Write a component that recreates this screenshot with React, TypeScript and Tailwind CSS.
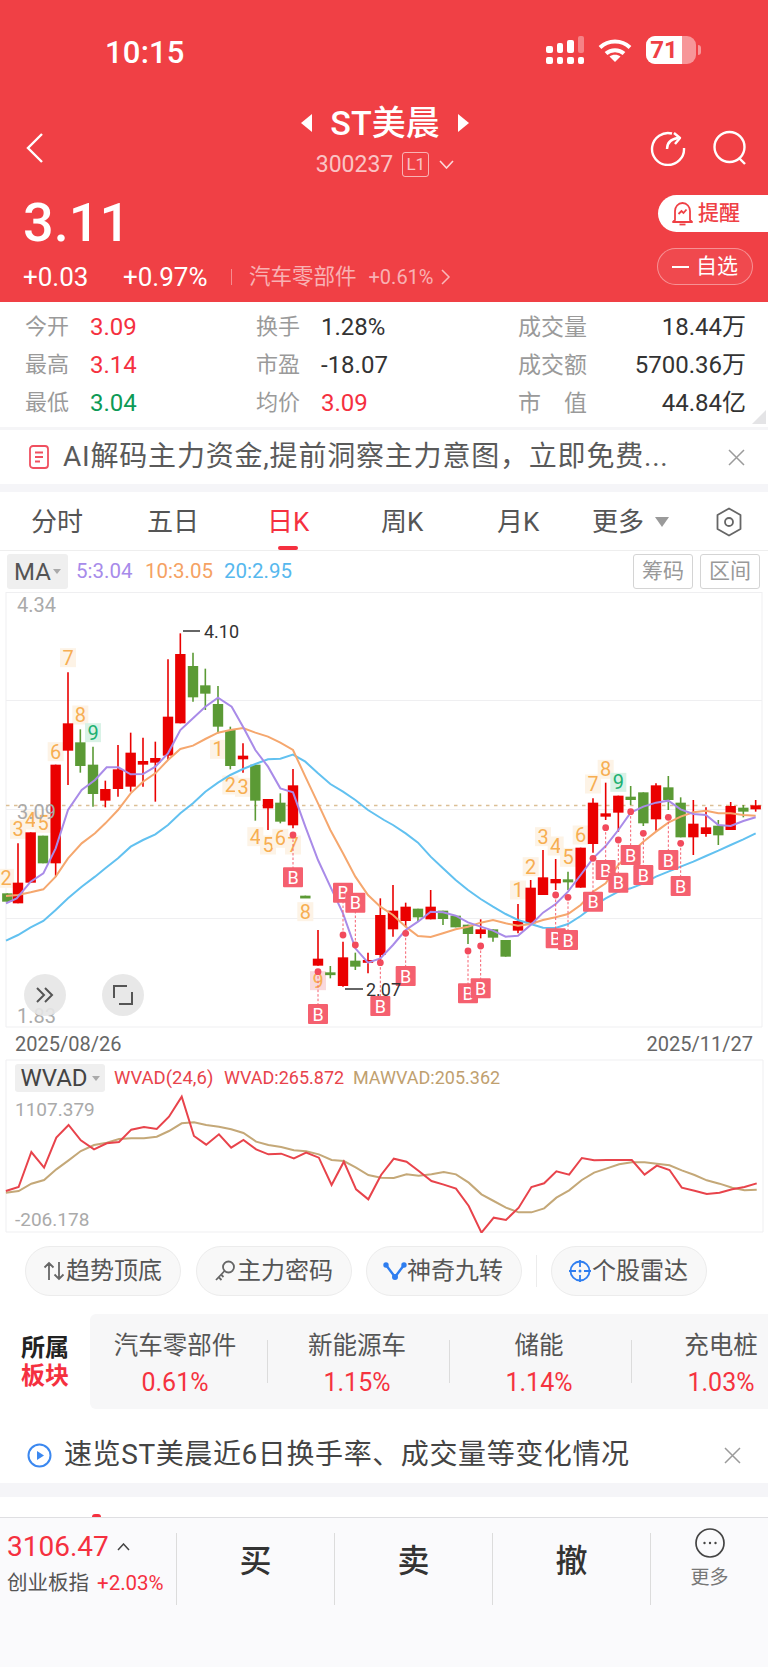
import React from "react";

const RED = "#f5303f";
type C = [number, number, number, number, number, number, number];
// i, x, high, top, bottom, low, up(1)/down(0) in zoom units
const A: C[] = [
  [0, 22, 910, 910, 935, 935, 0],[1, 54, 760, 878, 940, 940, 1],[2, 92, 727, 727, 878, 878, 1],[3, 129, 737, 737, 820, 820, 0],
  [4, 167, 524, 524, 820, 860, 1],[5, 204, 247, 400, 482, 585, 1],[6, 241, 418, 457, 528, 548, 0],[7, 279, 470, 524, 612, 650, 0],
  [8, 316, 572, 597, 632, 652, 1],[9, 354, 465, 538, 597, 620, 1],[10, 392, 428, 488, 590, 605, 1],[11, 429, 443, 513, 524, 590, 1],
  [12, 466, 455, 504, 518, 635, 1],[13, 504, 208, 380, 497, 510, 1],[14, 541, 130, 192, 400, 400, 1],[15, 579, 188, 228, 322, 335, 0],
  [16, 616, 236, 286, 311, 360, 0],[17, 654, 288, 342, 410, 430, 0],[18, 691, 410, 420, 528, 538, 0],[19, 729, 460, 497, 508, 548, 1],
  [20, 766, 524, 524, 632, 692, 0],[21, 804, 627, 627, 655, 720, 1],[22, 841, 610, 638, 695, 700, 0],[23, 879, 537, 586, 706, 715, 1],
  [24, 916, 917, 917, 922, 922, 0],[25, 954, 1020, 1106, 1127, 1127, 1],[26, 991, 1128, 1147, 1152, 1165, 0],[27, 1029, 1055, 1102, 1188, 1190, 1],
  [28, 1066, 1088, 1112, 1130, 1140, 0],[29, 1104, 1088, 1110, 1118, 1150, 1],[30, 1141, 925, 975, 1095, 1110, 1],
];
const B: C[] = [
  [31, 27, 495, 572, 628, 650, 1],[32, 65, 548, 560, 603, 620, 1],[33, 102, 566, 566, 592, 605, 0],[34, 140, 510, 560, 598, 598, 1],
  [35, 177, 572, 572, 597, 615, 0],[36, 215, 587, 587, 622, 622, 0],[37, 252, 614, 614, 642, 672, 0],[38, 290, 598, 628, 642, 655, 1],
  [39, 327, 628, 628, 653, 665, 0],[40, 365, 660, 660, 710, 710, 0],[41, 402, 552, 603, 632, 640, 1],[42, 440, 480, 503, 610, 610, 1],
  [43, 477, 390, 472, 525, 525, 1],[44, 515, 417, 477, 490, 510, 1],[45, 552, 455, 478, 487, 510, 0],[46, 590, 383, 383, 503, 503, 1],
  [47, 627, 235, 248, 372, 398, 1],[48, 665, 188, 280, 290, 300, 1],[49, 703, 227, 227, 278, 335, 1],[50, 740, 198, 230, 240, 255, 0],
  [51, 778, 217, 217, 310, 318, 0],[52, 816, 190, 196, 298, 332, 1],[53, 853, 168, 202, 240, 270, 0],[54, 890, 232, 248, 352, 352, 0],
  [55, 928, 240, 311, 352, 405, 1],[56, 966, 262, 322, 342, 350, 1],[57, 1003, 300, 317, 346, 375, 0],[58, 1040, 246, 258, 330, 330, 1],
  [59, 1078, 255, 263, 275, 292, 0],[60, 1115, 240, 256, 268, 275, 1],
];
const ax = (x: number) => x / 3, ay = (y: number) => 590 + y / 3;
const bx = (x: number) => 384 + x / 3, by = (y: number) => 720 + y / 3;
const ma5a = [[18,940],[50,925],[92,875],[130,850],[167,775],[204,660],[245,600],[285,570],[320,532],[355,532],[392,553],[429,552],[466,530],[504,490],[541,420],[579,385],[616,350],[654,323],[695,350],[729,410],[766,480],[804,530],[841,595],[879,607],[916,710],[954,810],[991,890],[1029,970],[1066,1075],[1104,1118],[1141,1105]];
const ma5b = [[27,675],[65,630],[102,605],[140,575],[177,577],[215,587],[252,607],[290,620],[327,632],[365,650],[402,647],[440,615],[477,578],[515,552],[552,515],[590,465],[627,415],[665,378],[703,330],[740,278],[778,260],[816,248],[853,242],[890,268],[928,282],[966,285],[1003,315],[1040,318],[1078,303],[1115,292]];
const ma10a = [[18,918],[54,915],[92,907],[130,898],[167,860],[204,805],[245,760],[285,730],[316,700],[354,660],[392,610],[429,575],[466,550],[504,510],[541,477],[579,467],[616,447],[654,428],[691,420],[729,414],[766,428],[804,440],[841,458],[879,480],[916,560],[954,640],[991,720],[1029,790],[1066,860],[1104,915],[1141,950]];
const ma10b = [[27,585],[65,620],[102,648],[140,651],[177,640],[215,628],[252,620],[290,608],[327,600],[365,610],[402,617],[440,612],[477,600],[515,592],[552,582],[590,555],[627,515],[665,490],[703,435],[740,400],[778,365],[816,335],[853,308],[890,290],[928,277],[966,272],[1003,280],[1040,280],[1078,285],[1115,287]];
const ma20a = [[18,1052],[54,1035],[92,1012],[130,993],[167,960],[204,925],[245,890],[285,860],[316,835],[354,805],[392,770],[429,750],[466,733],[504,705],[541,670],[579,640],[616,605],[654,578],[691,555],[729,537],[766,522],[804,508],[841,506],[879,494],[916,515],[954,550],[991,582],[1029,605],[1066,630],[1104,660],[1152,690]];
const ma20b = [[27,315],[65,340],[102,368],[140,410],[177,445],[215,480],[252,510],[290,537],[327,560],[365,582],[402,600],[440,612],[477,623],[515,624],[552,612],[590,588],[627,560],[665,535],[703,515],[740,505],[778,490],[816,470],[853,455],[890,440],[928,425],[966,408],[1003,392],[1040,375],[1078,358],[1115,340]];
const line = (a: number[][], b: number[][]) =>
  [...a.map(([x, y]) => `${ax(x)},${ay(y)}`), ...b.map(([x, y]) => `${bx(x)},${by(y)}`)].join(" ");

const tdA: [string, number, number, number][] = [["2",18,865,0],["3",54,718,0],["4",92,690,0],["5",129,700,0],["6",167,485,0],["7",204,203,0],["8",241,375,0],["9",279,428,1],["1",654,478,0],["2",691,585,0],["3",729,592,0],["4",766,740,0],["5",804,765,0],["6",841,745,0],["7",879,765,0],["8",916,965,0],["9",954,1172,2]];
const tdB: [string, number, number, number][] = [["1",402,510,0],["2",440,440,0],["3",477,350,0],["4",515,378,0],["5",552,412,0],["6",590,345,0],["7",627,192,0],["8",665,148,0],["9",703,187,1]];
const bmA = [[879,862,735],[954,1272,1145],[1029,908,1035],[1066,938,1065],[1141,1248,1118]];
const bmB = [[65,768,640],[252,820,693],[290,805,678],[515,655,525],[552,660,532],[627,545,415],[665,450,323],[703,488,360],[740,405,275],[778,465,340],[853,420,292],[890,498,370]];

const wRed = [[12,420],[38,408],[64,303],[90,350],[115,260],[140,222],[165,268],[192,295],[218,277],[243,273],[268,236],[294,228],[320,234],[345,197],[371,137],[396,255],[421,281],[447,250],[472,290],[497,267],[523,295],[548,310],[574,308],[600,322],[625,305],[651,320],[677,402],[702,332],[727,415],[752,445],[778,372],[804,323],[830,332],[855,360],[881,390],[906,401],[931,413],[957,465],[983,545],[1008,500],[1033,507],[1059,470],[1085,408],[1111,397],[1136,361],[1162,371],[1188,321],[1213,328],[1239,327],[1264,327],[1290,327],[1316,371],[1341,344],[1367,357],[1392,410],[1418,419],[1443,429],[1469,425],[1495,415],[1520,408],[1545,397]];
const wTan = [[12,425],[38,420],[64,398],[90,387],[115,355],[140,328],[165,300],[192,282],[218,275],[243,264],[268,262],[294,262],[320,257],[345,240],[371,217],[396,214],[421,222],[447,227],[472,235],[497,246],[523,272],[548,282],[574,288],[600,298],[625,301],[651,310],[677,327],[702,330],[727,350],[752,372],[778,380],[804,381],[830,370],[855,374],[881,370],[906,363],[931,370],[957,395],[983,430],[1008,450],[1033,470],[1059,484],[1085,484],[1111,472],[1136,440],[1162,418],[1188,387],[1213,365],[1239,352],[1264,340],[1290,334],[1316,334],[1341,338],[1367,343],[1392,358],[1418,372],[1443,388],[1469,398],[1495,410],[1520,418],[1545,416]];
const wl = (p: number[][]) => p.map(([x, y]) => `${x / 2.0417},${y / 3}`).join(" ");

function Candle({ c, mx, my }: { c: C; mx: (n: number) => number; my: (n: number) => number }) {
  const [, x, hi, t, b, lo, up] = c;
  const col = up ? "#ea0000" : "#5b9a35";
  return (
    <g>
      <line x1={mx(x)} x2={mx(x)} y1={my(hi)} y2={my(lo)} stroke={col} strokeWidth={1.6} />
      <rect x={mx(x) - 5.2} width={10.4} y={my(t)} height={Math.max(my(b) - my(t), 2.8)} fill={col} />
    </g>
  );
}

function TD({ t, x, y, k }: { t: string; x: number; y: number; k: number }) {
  const bg = k === 1 ? "#d9f2e6" : k === 2 ? "#f9d9dd" : "#fdf3e6";
  const fg = k === 1 ? "#20b071" : "#f7ae52";
  return (
    <g>
      <rect x={x - 8} y={y - 9.500} width={16} height={19} fill={bg} />
      <text x={x} y={y + 7} textAnchor="middle" fontSize={20} fill={fg}>{t}</text>
    </g>
  );
}

function Marker({ x, yb, yd }: { x: number; yb: number; yd: number }) {
  return (
    <g>
      <line x1={x} x2={x} y1={yd} y2={yb} stroke="#f5606f" strokeWidth={1} strokeDasharray="2.5 2" />
      <circle cx={x} cy={yd} r={3.400} fill="#f24a5c" />
      <rect x={x - 10} y={yb - 10} width={20} height={20} fill="#f5606f" rx={1} />
      <text x={x} y={yb + 6.500} textAnchor="middle" fontSize={18} fill="#fff">B</text>
    </g>
  );
}

function KChart() {
  const grid = [592.5, 700.5, 809.5, 918.5, 1027];
  return (
    <svg className="block w-[768px] h-[436px]" viewBox="0 592 768 436" fontFamily="Roboto, sans-serif">
      {grid.map((y) => <line key={y} x1={6} x2={762} y1={y} y2={y} stroke="#efeff1" strokeWidth={1} />)}
      <line x1={6} x2={6} y1={592} y2={1027} stroke="#efeff1" />
      <line x1={762} x2={762} y1={592} y2={1027} stroke="#efeff1" />
      <line x1={6} x2={762} y1={805.5} y2={805.5} stroke="#dcbf95" strokeWidth={1.4} strokeDasharray="3.5 4.5" />
      {tdA.map(([t, x, y, k], i) => <TD key={i} t={t} x={ax(x)} y={ay(y)} k={k} />)}
      {tdB.map(([t, x, y, k], i) => <TD key={i} t={t} x={bx(x)} y={by(y)} k={k} />)}
      {A.map((c) => <Candle key={c[0]} c={c} mx={ax} my={ay} />)}
      {B.map((c) => <Candle key={c[0]} c={c} mx={bx} my={by} />)}
      <polyline points={line(ma20a, ma20b)} fill="none" stroke="#62c1f0" strokeWidth={2} />
      <polyline points={line(ma10a, ma10b)} fill="none" stroke="#f5a76e" strokeWidth={2} />
      <polyline points={line(ma5a, ma5b)} fill="none" stroke="#a98be8" strokeWidth={2} />
      {bmA.map(([x, y, d], i) => <Marker key={i} x={ax(x)} yb={ay(y)} yd={ay(d)} />)}
      {bmB.map(([x, y, d], i) => <Marker key={i} x={bx(x)} yb={by(y)} yd={by(d)} />)}
      <line x1={183} x2={200} y1={631} y2={631} stroke="#333" strokeWidth={1.5} />
      <text x={204} y={638} fontSize={18} fill="#333">4.10</text>
      <line x1={345} x2={363} y1={989} y2={989} stroke="#333" strokeWidth={1.5} />
      <text x={366} y={996} fontSize={18} fill="#333">2.07</text>
    </svg>
  );
}

function Stat({ label, value, color, w }: { label: string; value: string; color: string; w: string }) {
  return (
    <div className={`flex items-center ${w}`}>
      <span className="text-[22px] leading-none w-[65px] text-[#9a9a9a]">{label}</span>
      <span className="text-[24px] leading-none" style={{ color }}>{value}</span>
    </div>
  );
}

function Pill({ icon, text }: { icon: React.ReactNode; text: string }) {
  return (
    <div className="flex items-center justify-center h-[50px] w-[156px] rounded-full bg-[#f8f8f8] border border-[#ececec] text-[24px] text-[#555] pr-[2px]">
      {icon}<span>{text}</span>
    </div>
  );
}

function Sector({ name, val, line }: { name: string; val: string; line?: boolean }) {
  return (
    <div className="relative flex flex-col items-center justify-center w-[182px] shrink-0 pt-[6px]">
      <span className="text-[24.5px] leading-none text-[#555] whitespace-nowrap">{name}</span>
      <span className="text-[25px] leading-none mt-[12px] text-[#f5333f]">{val}</span>
      {line && <span className="absolute -right-[2px] top-[26px] w-px h-[43px] bg-[#dcdcdc]" />}
    </div>
  );
}

function X() {
  return (
    <svg width="17" height="17" viewBox="0 0 17 17" fill="none" stroke="#9b9b9b" strokeWidth="1.5"><path d="M1 1l15 15M16 1L1 16" /></svg>
  );
}

export default function App() {
  return (
    <div className="w-[768px] h-[1667px] overflow-hidden bg-white flex flex-col font-['Roboto','Noto_Sans_CJK_SC',sans-serif]">
      {/* header */}
      <div className="h-[302px] shrink-0 bg-[#f04045] text-white flex flex-col">
        <div className="h-[104px] shrink-0 flex items-start pt-[36px]">
          <span className="ml-[105px] text-[31px] leading-[34px] font-medium tracking-[0.2px]">10:15</span>
          <div className="ml-auto mr-[67px] flex items-center">
            <svg width="40" height="28" viewBox="0 0 40 28" fill="#fff" className="mr-[13px]">
              <rect x="1" y="21" width="7" height="7" rx="2" /><rect x="12" y="21" width="6" height="7" rx="2" /><rect x="22" y="21" width="7" height="7" rx="2" /><rect x="33" y="21" width="6" height="7" rx="2" />
              <rect x="1" y="10" width="7" height="7" rx="2" /><rect x="12" y="7" width="6" height="10" rx="2" /><rect x="22" y="4" width="7" height="13" rx="2" /><rect x="33" y="0" width="6" height="17" rx="2" fill="#fff" fillOpacity=".35" />
            </svg>
            <svg width="34" height="25" viewBox="0 0 34 25" fill="none" stroke="#fff" strokeWidth="4" className="mr-[14px]">
              <path d="M2 9.500C10.500 1.500 23.500 1.500 32 9.500" /><path d="M8 15.500c5-4.500 13-4.500 18 0" /><path d="M17 24l-5.500-5.500c3-2.500 8-2.500 11 0z" fill="#fff" stroke="none" />
            </svg>
            <div className="relative flex h-[28px] w-[50px] rounded-[9px] overflow-hidden bg-white/45">
              <div className="w-[36px] h-full bg-white flex items-center justify-center text-[#ef4045] text-[24px] font-bold leading-none">71</div>
            </div>
            <div className="w-[3px] h-[10px] ml-[2px] rounded-r bg-white/45" />
          </div>
        </div>
        <div className="h-[77px] shrink-0 flex items-center relative -mt-[3px] mb-[3px]">
          <svg width="20" height="32" viewBox="0 0 20 32" fill="none" stroke="#fff" strokeWidth="2.400" className="ml-[25px] mt-[17px]"><path d="M17 2L3 16l14 14" /></svg>
          <div className="absolute left-[300px] top-[3px] w-[170px] flex flex-col items-center">
            <div className="flex items-center h-[38px]">
              <svg width="12" height="18" viewBox="0 0 12 18" fill="#fff" className="shrink-0"><path d="M11 0v18L0 9z" /></svg>
              <span className="text-[34px] leading-none mx-[17px] whitespace-nowrap font-medium">ST美晨</span>
              <svg width="12" height="18" viewBox="0 0 12 18" fill="#fff" className="shrink-0"><path d="M1 0v18l11-9z" /></svg>
            </div>
            <div className="flex items-center mt-[10px] text-white/70 whitespace-nowrap">
              <span className="text-[23px] leading-none">300237</span>
              <span className="ml-[9px] w-[27px] h-[25px] border border-white/60 rounded-[3px] text-[17px] leading-[23px] text-center">L1</span>
              <svg width="15" height="9" viewBox="0 0 15 9" fill="none" stroke="#ffffffcc" strokeWidth="1.600" className="ml-[10px]"><path d="M1 1l6.500 7L14 1" /></svg>
            </div>
          </div>
          <div className="ml-auto mr-[20px] flex items-center gap-[26px] mt-[17px]">
            <svg width="36" height="36" viewBox="0 0 36 36" fill="none" stroke="#fff" strokeWidth="2.400">
              <path d="M22 3.500A16 16 0 1 0 34 18" /><path d="M17 19c0-6 4-10 11-11" /><path d="M24 3l6 5-5 6" strokeLinejoin="round" />
            </svg>
            <svg width="36" height="36" viewBox="0 0 36 36" fill="none" stroke="#fff" strokeWidth="2.400">
              <circle cx="17.500" cy="17" r="15" /><path d="M27 28l6 6" />
            </svg>
          </div>
        </div>
        <div className="flex-1 flex justify-between pt-[14px]">
          <div className="flex flex-col pl-[23px] pt-[1px]">
            <span className="text-[54px] leading-[54px] font-medium">3.11</span>
            <div className="flex items-center mt-[14px] whitespace-nowrap">
              <span className="text-[26px] leading-none w-[100px]">+0.03</span>
              <span className="text-[26px] leading-none w-[108px]">+0.97%</span>
              <span className="w-px h-[16px] bg-white/40" />
              <span className="ml-[17px] text-[21.500px] leading-none text-white/60">汽车零部件</span>
              <span className="ml-[12px] text-[20px] leading-none text-white/60">+0.61%</span>
              <svg width="10" height="16" viewBox="0 0 10 16" fill="none" stroke="#ffffffa0" strokeWidth="1.500" className="ml-[7px]"><path d="M1 1l7 7-7 7" /></svg>
            </div>
          </div>
          <div className="flex flex-col items-end">
            <div className="w-[110px] h-[37px] bg-white rounded-l-full flex items-center pl-[14px]">
              <svg width="21" height="26" viewBox="0 0 21 26" fill="none" stroke="#ef4045" strokeWidth="1.800">
                <path d="M3 19V10c0-4 3-8 7.500-8S18 6 18 10v9l2 2H1z" strokeLinejoin="round" /><path d="M7.500 23.500h6" /><path d="M6.500 13l3-3 2 2 3-3.500" />
              </svg>
              <span className="ml-[5px] text-[21px] leading-none text-[#ef4045] font-medium">提醒</span>
            </div>
            <div className="mt-[16px] mr-[15px] w-[96px] h-[37px] rounded-full border border-white/40 bg-white/5 flex items-center justify-center">
              <span className="w-[17px] h-[2px] bg-white mr-[7px]" />
              <span className="text-[21px] leading-none">自选</span>
            </div>
          </div>
        </div>
      </div>

      {/* stats */}
      <div className="h-[125px] shrink-0 relative pt-[6px]">
        {[
          [["今开", "3.09", RED], ["换手", "1.28%", "#333"], ["成交量", "18.44万"]],
          [["最高", "3.14", RED], ["市盈", "-18.07", "#333"], ["成交额", "5700.36万"]],
          [["最低", "3.04", "#0d9a56"], ["均价", "3.09", RED], ["市　值", "44.84亿"]],
        ].map((r, i) => (
          <div key={i} className="h-[38px] flex items-center pl-[25px] pr-[22px]">
            <Stat label={r[0][0]} value={r[0][1]} color={r[0][2] as string} w="w-[231px]" />
            <Stat label={r[1][0]} value={r[1][1]} color={r[1][2] as string} w="w-[262px]" />
            <span className="text-[23px] leading-none text-[#9a9a9a] whitespace-nowrap">{r[2][0]}</span>
            <span className="ml-auto text-[24px] leading-none text-[#333]">{r[2][1]}</span>
          </div>
        ))}
        <div className="absolute right-[2px] bottom-[3px] w-0 h-0 border-l-[14px] border-l-transparent border-b-[14px] border-b-[#e4e4e6]" />
      </div>
      <div className="h-[3px] shrink-0 bg-[#f5f5f7]" />
      <div className="h-[54px] shrink-0 flex items-center pl-[29px]">
        <svg width="20" height="24" viewBox="0 0 20 24" fill="none" stroke="#f05060" strokeWidth="1.800">
          <rect x="1" y="1" width="18" height="22" rx="3" /><path d="M6 7.500h8M6 12h8M6 16.500h5" />
        </svg>
        <span className="ml-[14px] text-[28px] leading-none text-[#5a5a5a] tracking-[0.8px] whitespace-nowrap">AI解码主力资金,提前洞察主力意图，立即免费...</span>
        <span className="ml-auto mr-[23px]"><X /></span>
      </div>
      <div className="h-[8px] shrink-0 bg-[#f5f5f8]" />

      {/* tabs */}
      <div className="h-[59px] shrink-0 relative border-b border-[#eeeeee] text-[26px] leading-none text-[#555] flex items-center">
        {[["分时", 31], ["五日", 147], ["周K", 381], ["月K", 497], ["更多", 592]].map(([t, x]) => (
          <span key={t} className="absolute top-[17px]" style={{ left: x as number }}>{t}</span>
        ))}
        <span className="absolute top-[17px] left-[267px] text-[#f5303f]">日K</span>
        <span className="absolute left-[278px] top-[54px] w-[20px] h-[4px] rounded-full bg-[#f5303f]" />
        <svg width="14" height="10" viewBox="0 0 14 10" fill="#9a9a9a" className="absolute left-[655px] top-[25px]"><path d="M0 0h14L7 10z" /></svg>
        <svg width="28" height="30" viewBox="0 0 28 30" fill="none" stroke="#666" strokeWidth="1.800" className="absolute left-[715px] top-[15px]">
          <path d="M14 1.500l11.500 6.500v14L14 28.500 2.500 22V8z" strokeLinejoin="round" /><circle cx="14" cy="15" r="4" />
        </svg>
      </div>

      {/* MA row */}
      <div className="h-[41px] shrink-0 flex items-center pl-[7px] pr-[7px]">
        <div className="w-[61px] h-[35px] rounded-[3px] bg-[#efefef] flex items-center justify-center text-[24px] leading-none text-[#555]">
          MA<svg width="8" height="5" viewBox="0 0 8 5" fill="#aaa" className="ml-[2px]"><path d="M0 0h8L4 5z" /></svg>
        </div>
        <span className="ml-[8px] w-[69px] text-[20.500px] leading-none text-[#a78bea]">5:3.04</span>
        <span className="w-[79px] text-[20.500px] leading-none text-[#f5a263]">10:3.05</span>
        <span className="text-[20.500px] leading-none text-[#56b8ee]">20:2.95</span>
        <div className="ml-auto flex gap-[7px] pr-[1px]">
          {["筹码", "区间"].map((t) => (
            <span key={t} className="w-[60px] h-[35px] rounded-[3px] border border-[#d4d4d4] flex items-center justify-center text-[21px] leading-none text-[#999]">{t}</span>
          ))}
        </div>
      </div>

      {/* K chart */}
      <div className="relative h-[436px] shrink-0">
        <KChart />
        <span className="absolute left-[17px] top-[3px] text-[20px] leading-none text-[#aaa]">4.34</span>
        <span className="absolute left-[17px] top-[210px] text-[20px] leading-none text-[#aaa]">3.09</span>
        <span className="absolute left-[17px] top-[414px] text-[20px] leading-none text-[#aaa]">1.83</span>
        <div className="absolute left-[24px] top-[382px] w-[42px] h-[42px] rounded-full bg-[#e6e6e6]/90 flex items-center justify-center">
          <svg width="20" height="16" viewBox="0 0 20 16" fill="none" stroke="#555" strokeWidth="2"><path d="M2 1l7 7-7 7M10 1l7 7-7 7" /></svg>
        </div>
        <div className="absolute left-[102px] top-[382px] w-[42px] h-[42px] rounded-full bg-[#e6e6e6]/90 flex items-center justify-center">
          <svg width="20" height="20" viewBox="0 0 20 20" fill="none" stroke="#555" strokeWidth="2"><path d="M1 13V1h13M19 7v12H6" /></svg>
        </div>
      </div>

      {/* dates */}
      <div className="h-[31px] shrink-0 flex items-center justify-between pl-[15px] pr-[15px] text-[20px] leading-none text-[#666]">
        <span>2025/08/26</span><span>2025/11/27</span>
      </div>

      {/* WVAD */}
      <div className="relative h-[174px] shrink-0">
        <svg className="block w-[768px] h-[174px]" viewBox="0 -1 768 174">
          <line x1={6} x2={763} y1={0} y2={0} stroke="#efeff1" />
          <line x1={6} x2={763} y1={172} y2={172} stroke="#efeff1" />
          <line x1={6} x2={6} y1={0} y2={172} stroke="#efeff1" />
          <line x1={763} x2={763} y1={0} y2={172} stroke="#efeff1" />
          <polyline points={wl(wTan)} fill="none" stroke="#c4a878" strokeWidth={2} transform="translate(0,-9)" />
          <polyline points={wl(wRed)} fill="none" stroke="#e8434b" strokeWidth={2} transform="translate(0,-9)" />
        </svg>
        <div className="absolute left-[15px] top-[5px] flex items-center">
          <div className="w-[90px] h-[28px] rounded-[3px] bg-[#efefef] flex items-center justify-center text-[24px] leading-none text-[#444]">
            WVAD<svg width="8" height="5" viewBox="0 0 8 5" fill="#aaa" className="ml-[4px]"><path d="M0 0h8L4 5z" /></svg>
          </div>
          <span className="ml-[9px] w-[110px] text-[18.500px] leading-none text-[#e8434b] whitespace-nowrap">WVAD(24,6)</span>
          <span className="w-[129px] text-[18px] leading-none text-[#e8434b] whitespace-nowrap">WVAD:265.872</span>
          <span className="text-[18px] leading-none text-[#bfa06f] whitespace-nowrap">MAWVAD:205.362</span>
        </div>
        <span className="absolute left-[15px] top-[41px] text-[19px] leading-none text-[#aaa]">1107.379</span>
        <span className="absolute left-[15px] top-[151px] text-[19px] leading-none text-[#aaa]">-206.178</span>
      </div>

      {/* pills */}
      <div className="h-[81px] shrink-0 flex items-start pt-[13px] pl-[25px]">
        <Pill text="趋势顶底" icon={
          <svg width="24" height="24" viewBox="0 0 24 24" fill="none" stroke="#666" strokeWidth="1.800"><path d="M7 21V4M2.500 8.500L7 4l4.500 4.500M17 3v17M12.500 15.500L17 20l4.500-4.500" /></svg>} />
        <span className="w-[15px]" />
        <Pill text="主力密码" icon={
          <svg width="24" height="24" viewBox="0 0 24 24" fill="none" stroke="#666" strokeWidth="1.800"><circle cx="15.500" cy="8" r="5.500" /><path d="M11.500 12L3 21M5.500 18l3 3M8 15.500l2.500 2.500" /></svg>} />
        <span className="w-[14px]" />
        <Pill text="神奇九转" icon={
          <svg width="24" height="24" viewBox="0 0 24 24" fill="none" stroke="#2f7ef0" strokeWidth="2.400"><path d="M3 6l9 12 9-12" /><circle cx="3" cy="6" r="1.500" fill="#2f7ef0" /><circle cx="21" cy="6" r="1.500" fill="#2f7ef0" /><circle cx="12" cy="18" r="1.800" fill="#2f7ef0" /></svg>} />
        <span className="ml-[14px] mr-[14px] mt-[9px] w-px h-[32px] bg-[#ececec]" />
        <Pill text="个股雷达" icon={
          <svg width="24" height="24" viewBox="0 0 24 24" fill="none" stroke="#2f7ef0" strokeWidth="1.800"><circle cx="12" cy="12" r="9.500" /><path d="M12 1v7M12 16v7M1 12h7M16 12h7" /><circle cx="12" cy="12" r="1.500" fill="#2f7ef0" stroke="none" /></svg>} />
      </div>

      {/* sectors */}
      <div className="h-[95px] shrink-0 flex items-center overflow-hidden">
        <div className="w-[90px] shrink-0 pl-[21px] text-[24px] leading-[28px] font-bold">
          <div className="text-[#222]">所属</div>
          <div className="text-[#f5303f]">板块</div>
        </div>
        <div className="flex-1 h-full bg-[#f7f7f8] rounded-l-[6px] flex overflow-hidden">
          <div className="flex -ml-[6px] shrink-0">
            <Sector name="汽车零部件" val="0.61%" line />
            <Sector name="新能源车" val="1.15%" line />
            <Sector name="储能" val="1.14%" line />
            <Sector name="充电桩" val="1.03%" />
          </div>
        </div>
      </div>

      {/* banner 2 */}
      <div className="h-[74px] shrink-0 flex items-center pl-[27px] pt-[18px]">
        <svg width="25" height="25" viewBox="0 0 25 25" fill="none" stroke="#3b88f0" strokeWidth="2" className="shrink-0"><circle cx="12.500" cy="12.500" r="11" /><path d="M10 8l7 4.500-7 4.500z" fill="#3b88f0" stroke="none" /></svg>
        <span className="ml-[12px] text-[28px] leading-none text-[#444] tracking-[0.6px] whitespace-nowrap">速览ST美晨近6日换手率、成交量等变化情况</span>
        <span className="ml-auto mr-[27px]"><X /></span>
      </div>
      <div className="h-[14px] shrink-0 bg-[#f5f5f8]" />
      <div className="h-[20px] shrink-0 relative">
        <span className="absolute left-[92px] top-[17px] w-[9px] h-[3px] rounded-t-full bg-[#f5303f]" />
      </div>

      {/* bottom */}
      <div className="flex-1 bg-[#fafafc] border-t border-[#dfdfe2] relative">
        <div className="h-[72px] mt-[15px] flex items-stretch">
          <div className="w-[177px] shrink-0 pl-[7px] border-r border-[#dcdcdc] flex flex-col">
            <div className="flex items-center h-[28px]">
              <span className="text-[28px] leading-none text-[#f5303f]">3106.47</span>
              <svg width="13" height="8" viewBox="0 0 13 8" fill="none" stroke="#444" strokeWidth="1.500" className="ml-[8px]"><path d="M1 7l5.500-6L12 7" /></svg>
            </div>
            <div className="flex items-center mt-[12px] whitespace-nowrap">
              <span className="text-[20.500px] leading-none text-[#555]">创业板指</span>
              <span className="ml-[8px] text-[20.500px] leading-none text-[#f5303f]">+2.03%</span>
            </div>
          </div>
          {["买", "卖", "撤"].map((t) => (
            <div key={t} className="w-[158px] shrink-0 border-r border-[#dcdcdc] flex items-center justify-center text-[32px] leading-none font-medium text-[#333] pb-[16px]">{t}</div>
          ))}
          <div className="flex-1 flex flex-col items-center -mt-[5px]">
            <svg width="30" height="30" viewBox="0 0 30 30" fill="none" stroke="#444" strokeWidth="1.700"><circle cx="15" cy="15" r="14" /><circle cx="9.500" cy="15" r="1.200" fill="#444" stroke="none" /><circle cx="15" cy="15" r="1.200" fill="#444" stroke="none" /><circle cx="20.500" cy="15" r="1.200" fill="#444" stroke="none" /></svg>
            <span className="mt-[10px] text-[19px] leading-none text-[#777]">更多</span>
          </div>
        </div>
      </div>
    </div>
  );
}
